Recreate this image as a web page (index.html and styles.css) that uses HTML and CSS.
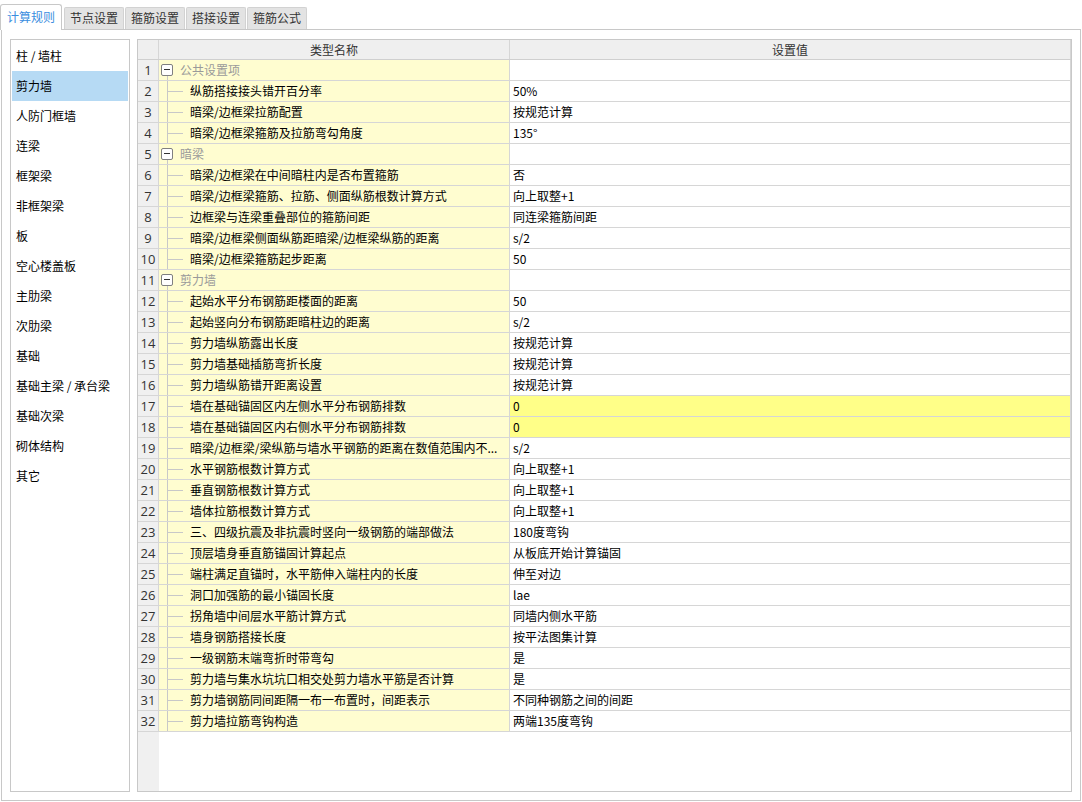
FILE: index.html
```html
<!DOCTYPE html>
<html lang="zh-CN">
<head>
<meta charset="utf-8">
<title>计算规则</title>
<link rel="stylesheet" href="styles.css">
</head>
<body>
<div class="tabs">
  <div class="tab active">计算规则</div>
  <div class="tab">节点设置</div>
  <div class="tab">箍筋设置</div>
  <div class="tab">搭接设置</div>
  <div class="tab">箍筋公式</div>
</div>
<div class="panel">
  <ul class="side">
    <li>柱 / 墙柱</li>
    <li class="sel">剪力墙</li>
    <li>人防门框墙</li>
    <li>连梁</li>
    <li>框架梁</li>
    <li>非框架梁</li>
    <li>板</li>
    <li>空心楼盖板</li>
    <li>主肋梁</li>
    <li>次肋梁</li>
    <li>基础</li>
    <li>基础主梁 / 承台梁</li>
    <li>基础次梁</li>
    <li>砌体结构</li>
    <li>其它</li>
  </ul>
  <div class="grid">
    <div class="row hdr"><div class="c-no"></div><div class="c-name">类型名称</div><div class="c-val">设置值</div></div>
    <div class="row group"><div class="c-no">1</div><div class="c-name"><span class="box"></span><span class="gl">公共设置项</span></div><div class="c-val"></div></div>
    <div class="row"><div class="c-no">2</div><div class="c-name">纵筋搭接接头错开百分率</div><div class="c-val">50%</div></div>
    <div class="row"><div class="c-no">3</div><div class="c-name">暗梁/边框梁拉筋配置</div><div class="c-val">按规范计算</div></div>
    <div class="row last"><div class="c-no">4</div><div class="c-name">暗梁/边框梁箍筋及拉筋弯勾角度</div><div class="c-val">135°</div></div>
    <div class="row group"><div class="c-no">5</div><div class="c-name"><span class="box"></span><span class="gl">暗梁</span></div><div class="c-val"></div></div>
    <div class="row"><div class="c-no">6</div><div class="c-name">暗梁/边框梁在中间暗柱内是否布置箍筋</div><div class="c-val">否</div></div>
    <div class="row"><div class="c-no">7</div><div class="c-name">暗梁/边框梁箍筋、拉筋、侧面纵筋根数计算方式</div><div class="c-val">向上取整+1</div></div>
    <div class="row"><div class="c-no">8</div><div class="c-name">边框梁与连梁重叠部位的箍筋间距</div><div class="c-val">同连梁箍筋间距</div></div>
    <div class="row"><div class="c-no">9</div><div class="c-name">暗梁/边框梁侧面纵筋距暗梁/边框梁纵筋的距离</div><div class="c-val">s/2</div></div>
    <div class="row last"><div class="c-no">10</div><div class="c-name">暗梁/边框梁箍筋起步距离</div><div class="c-val">50</div></div>
    <div class="row group"><div class="c-no">11</div><div class="c-name"><span class="box"></span><span class="gl">剪力墙</span></div><div class="c-val"></div></div>
    <div class="row"><div class="c-no">12</div><div class="c-name">起始水平分布钢筋距楼面的距离</div><div class="c-val">50</div></div>
    <div class="row"><div class="c-no">13</div><div class="c-name">起始竖向分布钢筋距暗柱边的距离</div><div class="c-val">s/2</div></div>
    <div class="row"><div class="c-no">14</div><div class="c-name">剪力墙纵筋露出长度</div><div class="c-val">按规范计算</div></div>
    <div class="row"><div class="c-no">15</div><div class="c-name">剪力墙基础插筋弯折长度</div><div class="c-val">按规范计算</div></div>
    <div class="row"><div class="c-no">16</div><div class="c-name">剪力墙纵筋错开距离设置</div><div class="c-val">按规范计算</div></div>
    <div class="row hl"><div class="c-no">17</div><div class="c-name">墙在基础锚固区内左侧水平分布钢筋排数</div><div class="c-val">0</div></div>
    <div class="row hl"><div class="c-no">18</div><div class="c-name">墙在基础锚固区内右侧水平分布钢筋排数</div><div class="c-val">0</div></div>
    <div class="row"><div class="c-no">19</div><div class="c-name">暗梁/边框梁/梁纵筋与墙水平钢筋的距离在数值范围内不...</div><div class="c-val">s/2</div></div>
    <div class="row"><div class="c-no">20</div><div class="c-name">水平钢筋根数计算方式</div><div class="c-val">向上取整+1</div></div>
    <div class="row"><div class="c-no">21</div><div class="c-name">垂直钢筋根数计算方式</div><div class="c-val">向上取整+1</div></div>
    <div class="row"><div class="c-no">22</div><div class="c-name">墙体拉筋根数计算方式</div><div class="c-val">向上取整+1</div></div>
    <div class="row"><div class="c-no">23</div><div class="c-name">三、四级抗震及非抗震时竖向一级钢筋的端部做法</div><div class="c-val">180度弯钩</div></div>
    <div class="row"><div class="c-no">24</div><div class="c-name">顶层墙身垂直筋锚固计算起点</div><div class="c-val">从板底开始计算锚固</div></div>
    <div class="row"><div class="c-no">25</div><div class="c-name">端柱满足直锚时，水平筋伸入端柱内的长度</div><div class="c-val">伸至对边</div></div>
    <div class="row"><div class="c-no">26</div><div class="c-name">洞口加强筋的最小锚固长度</div><div class="c-val">lae</div></div>
    <div class="row"><div class="c-no">27</div><div class="c-name">拐角墙中间层水平筋计算方式</div><div class="c-val">同墙内侧水平筋</div></div>
    <div class="row"><div class="c-no">28</div><div class="c-name">墙身钢筋搭接长度</div><div class="c-val">按平法图集计算</div></div>
    <div class="row"><div class="c-no">29</div><div class="c-name">一级钢筋末端弯折时带弯勾</div><div class="c-val">是</div></div>
    <div class="row"><div class="c-no">30</div><div class="c-name">剪力墙与集水坑坑口相交处剪力墙水平筋是否计算</div><div class="c-val">是</div></div>
    <div class="row"><div class="c-no">31</div><div class="c-name">剪力墙钢筋同间距隔一布一布置时，间距表示</div><div class="c-val">不同种钢筋之间的间距</div></div>
    <div class="row last"><div class="c-no">32</div><div class="c-name">剪力墙拉筋弯钩构造</div><div class="c-val">两端135度弯钩</div></div>
  </div>
</div>
</body>
</html>
```
FILE: styles.css
```css
* { box-sizing: border-box; }
html, body { margin: 0; padding: 0; background: #fff; }
body {
  font-family: "Noto Sans CJK SC", "Noto Sans", sans-serif;
  font-size: 12px;
  color: #000;
  width: 1082px;
  height: 802px;
  overflow: hidden;
}
.tabs {
  display: flex;
  align-items: flex-end;
  height: 29px;
  gap: 1px;
}
.tab {
  width: 60px;
  height: 22px;
  line-height: 20px;
  text-align: center;
  background: #e3e3e3;
  border: 1px solid #d2d2d2;
  border-bottom: none;
  border-radius: 2px 2px 0 0;
  color: #333;
}
.tab.active {
  width: 62px;
  height: 26px;
  line-height: 24px;
  background: #fff;
  border-color: #c8c8c8;
  color: #3a8ee0;
  margin-bottom: -1px;
  margin-right: 1px;
  position: relative;
  z-index: 1;
  border-radius: 3px 3px 0 0;
}
.panel {
  margin-left: 1px;
  width: 1080px;
  height: 772px;
  border: 1px solid #c8c8c8;
  background: #fff;
  padding: 9px 8px 8px 8px;
  display: flex;
  gap: 7px;
}
.side {
  list-style: none;
  margin: 0;
  width: 120px;
  border: 1px solid #c8c8c8;
  padding: 1px;
}
.side li {
  height: 30px;
  line-height: 30px;
  padding-left: 4px;
  color: #000;
  white-space: nowrap;
}
.side li.sel { background: #b6daf4; }
.grid {
  width: 935px;
  border: 1px solid #c8c8c8;
  background: linear-gradient(to right, #f0f0f0 21px, #fff 21px);
}
.row {
  display: flex;
  height: 21px;
  border-bottom: 1px solid #d6d6d6;
  line-height: 20px;
}
.c-no {
  width: 21px;
  flex: none;
  text-align: center;
  color: #333;
  font-family: "Open Sans", "Noto Sans", sans-serif;
  font-size: 13px;
  background: #f0f0f0;
  border-right: 1px solid #d6d6d6;
}
.c-name {
  width: 351px;
  flex: none;
  background: #fffdd0;
  border-right: 1px solid #d6d6d6;
  padding-left: 31px;
  position: relative;
  white-space: nowrap;
  overflow: hidden;
  text-overflow: ellipsis;
}
.c-val {
  width: 561px;
  flex: none;
  background: #fff;
  border-right: 1px solid #d6d6d6;
  padding-left: 3px;
  white-space: nowrap;
}
.row.hdr { height: 20px; line-height: 19px; border-bottom-color: #cfcfcf; }
.row.hdr .c-no, .row.hdr .c-name, .row.hdr .c-val {
  background: #efefef;
  text-align: center;
  color: #333;
  padding-left: 0;
}
.row.hl .c-val { background: #ffff88; }
.row:not(.hdr):not(.group) .c-name::before {
  content: "";
  position: absolute;
  left: 8px;
  top: 0;
  bottom: 0;
  width: 1px;
  background: #c8c8c8;
}
.row.last .c-name::before { bottom: 10px; }
.row:not(.hdr):not(.group) .c-name::after {
  content: "";
  position: absolute;
  left: 8px;
  top: 10px;
  width: 16px;
  height: 1px;
  background: #c8c8c8;
}
.row.group .c-name {
  padding-left: 2px;
  display: flex;
  align-items: center;
}
.row.group .c-name::after {
  content: "";
  position: absolute;
  left: 8px;
  top: 16px;
  bottom: 0;
  width: 1px;
  background: #c8c8c8;
}
.box {
  width: 12px;
  height: 12px;
  border: 1px solid #808080;
  border-radius: 2px;
  background: #fff;
  position: relative;
  flex: none;
}
.box::before {
  content: "";
  position: absolute;
  left: 2px;
  right: 2px;
  top: 4px;
  height: 1px;
  background: #333;
}
.gl {
  margin-left: 7px;
  color: #9a9a9a;
}
```
